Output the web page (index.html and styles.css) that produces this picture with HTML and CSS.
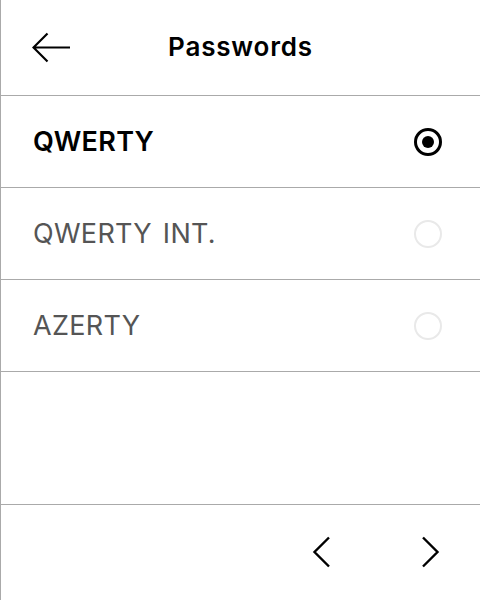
FILE: index.html
```html
<!DOCTYPE html>
<html>
<head>
<meta charset="utf-8">
<link rel="stylesheet" href="styles.css">
</head>
<body>
<div class="screen">
  <header class="header">
    <button class="icon-btn back" aria-label="Back">
      <svg width="40" height="32" viewBox="0 0 40 32">
        <path d="M38 15.5 H2 M15.5 1.5 L1.5 15.5 L15.5 29.5" fill="none" stroke="#000" stroke-width="2.2" stroke-linecap="butt" stroke-linejoin="miter"/>
      </svg>
    </button>
    <h1 class="title">Passwords</h1>
    <span></span>
  </header>
  <ul class="list">
    <li class="row selected"><span class="label">QWERTY</span><span class="radio on"></span></li>
    <li class="row"><span class="label">QWERTY INT.</span><span class="radio"></span></li>
    <li class="row"><span class="label">AZERTY</span><span class="radio"></span></li>
  </ul>
  <div class="spacer"></div>
  <footer class="footer">
    <button class="icon-btn" aria-label="Previous">
      <svg width="20" height="32" viewBox="0 0 20 32">
        <path d="M17 1.5 L2.5 16 L17 30.5" fill="none" stroke="#000" stroke-width="2.4"/>
      </svg>
    </button>
    <button class="icon-btn" aria-label="Next">
      <svg width="20" height="32" viewBox="0 0 20 32">
        <path d="M3 1.5 L17.5 16 L3 30.5" fill="none" stroke="#000" stroke-width="2.4"/>
      </svg>
    </button>
  </footer>
</div>
</body>
</html>
```
FILE: styles.css
```css
* { box-sizing: border-box; }
html, body { margin: 0; padding: 0; background: #fff; }
body { font-family: Inter, "Noto Sans", "Liberation Sans", sans-serif; color: #000; }

.screen {
  width: 480px;
  height: 600px;
  border-left: 1px solid #aaaaaa;
  display: flex;
  flex-direction: column;
}

.icon-btn {
  background: none;
  border: 0;
  padding: 0;
  margin: 0;
  display: flex;
  align-items: center;
  justify-content: center;
}

.header {
  height: 96px;
  flex: none;
  border-bottom: 1px solid #aaaaaa;
  display: grid;
  grid-template-columns: 1fr auto 1fr;
  align-items: center;
  padding-left: 31px;
}
.back { justify-self: start; margin-top: 1px; }
.title {
  margin: 0;
  font-size: 26px;
  font-weight: 600;
  letter-spacing: 0.8px;
  margin-left: -31px;
  margin-top: -3px;
}

.list { list-style: none; margin: 0; padding: 0; flex: none; }
.row {
  height: 92px;
  border-bottom: 1px solid #aaaaaa;
  display: flex;
  align-items: center;
  justify-content: space-between;
  padding: 0 38px 0 32px;
}
.label {
  font-size: 27px;
  color: #555555;
  font-weight: 400;
  letter-spacing: 0.3px;
  word-spacing: 3px;
}
.selected .label { color: #000; font-weight: 600; letter-spacing: 0.3px; }

.radio {
  width: 28px;
  height: 28px;
  border-radius: 50%;
  border: 2.5px solid #e9e9e9;
  display: flex;
  align-items: center;
  justify-content: center;
}
.radio.on { border: 3px solid #000; }
.radio.on::after {
  content: "";
  width: 12px;
  height: 12px;
  border-radius: 50%;
  background: #000;
}

.spacer { flex: 1; }

.footer {
  height: 96px;
  flex: none;
  border-top: 1px solid #aaaaaa;
  display: flex;
  align-items: center;
  justify-content: flex-end;
  gap: 88px;
  padding-right: 40px;
  padding-bottom: 2px;
}
```
